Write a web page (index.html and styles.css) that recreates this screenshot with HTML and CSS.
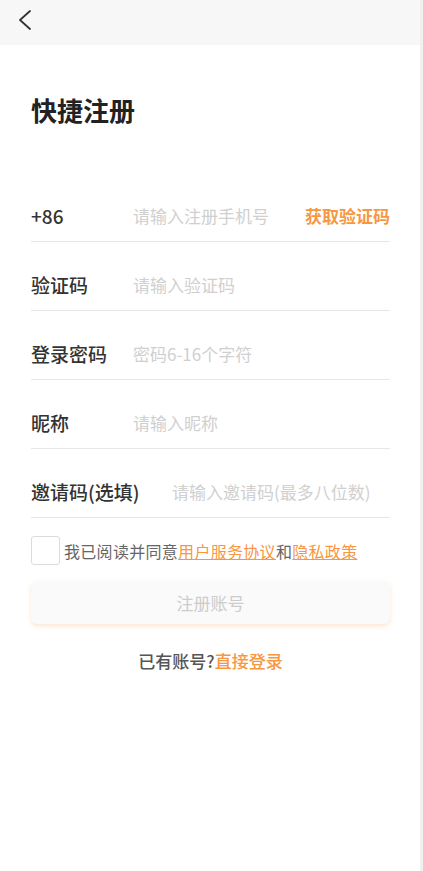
FILE: index.html
```html
<!DOCTYPE html>
<html lang="zh-CN">
<head>
    <meta charset="UTF-8">
    <meta name="viewport" content="width=device-width, initial-scale=1.0">
    <title>快捷注册</title>
    <link rel="stylesheet" href="styles.css">
</head>
<body>
    <div class="page">
        <header class="topbar">
            <svg class="back" width="16" height="22" viewBox="0 0 16 22">
                <path d="M13 2 L3 11 L13 20" fill="none" stroke="#333" stroke-width="1.8" stroke-linecap="round" stroke-linejoin="round"/>
            </svg>
        </header>
        <div class="container">
            <h1>快捷注册</h1>
            <form class="form">
                <div class="row">
                    <span class="label">+86</span>
                    <span class="placeholder">请输入注册手机号</span>
                    <span class="code">获取验证码</span>
                </div>
                <div class="row">
                    <span class="label">验证码</span>
                    <span class="placeholder">请输入验证码</span>
                </div>
                <div class="row">
                    <span class="label">登录密码</span>
                    <span class="placeholder">密码6-16个字符</span>
                </div>
                <div class="row">
                    <span class="label">昵称</span>
                    <span class="placeholder">请输入昵称</span>
                </div>
                <div class="row">
                    <span class="label wide">邀请码(选填)</span>
                    <span class="placeholder">请输入邀请码(最多八位数)</span>
                </div>
                <div class="agree">
                    <span class="box"></span>
                    <span>我已阅读并同意<a>用户服务协议</a>和<a>隐私政策</a></span>
                </div>
                <button type="button" class="submit">注册账号</button>
            </form>
            <p class="login">已有账号?<a>直接登录</a></p>
        </div>
    </div>
</body>
</html>
```

FILE: styles.css
```css
body {
    margin: 0;
    padding: 0;
    background: #f0f0f0;
    font-family: "Noto Sans CJK SC", "Noto Sans", sans-serif;
    color: #333;
}

.page {
    width: 420px;
    min-height: 871px;
    background: #ffffff;
}

.topbar {
    height: 45px;
    background: #f7f7f7;
    display: flex;
    align-items: center;
    padding-left: 17px;
}

.back {
    margin-top: -5px;
}

.container {
    padding: 0 30px 0 31px;
}

h1 {
    margin: 45px 0 0;
    font-size: 26px;
    font-weight: 700;
    line-height: 40px;
    color: #222;
}

.form {
    margin-top: 43px;
    display: flex;
    flex-direction: column;
}

.row {
    height: 69px;
    border-bottom: 1px solid #e6e6e6;
    display: flex;
    align-items: flex-end;
    padding-bottom: 12px;
    box-sizing: border-box;
    line-height: 26px;
}

.label {
    width: 102px;
    font-size: 19px;
    font-weight: 500;
    color: #333;
}

.label.wide {
    width: 141px;
}

.placeholder {
    flex: 1;
    font-size: 17px;
    color: #d0d0d0;
}

.code {
    font-size: 17px;
    font-weight: 700;
    color: #f7973f;
}

.agree {
    margin-top: 18px;
    display: flex;
    align-items: center;
    gap: 4px;
    font-size: 16px;
    letter-spacing: 0.3px;
    color: #666;
}

.box {
    width: 27px;
    height: 27px;
    border: 1px solid #dcdcdc;
    border-radius: 3px;
}

.agree a {
    color: #f7973f;
    text-decoration: underline;
}

.submit {
    margin-top: 16px;
    height: 43px;
    border: none;
    border-radius: 6px;
    background: #fafafa;
    color: #cccccc;
    font-family: inherit;
    font-size: 17px;
    box-shadow: 0 2px 4px rgba(247, 151, 63, 0.25);
}

.login {
    margin: 24px 0 0;
    text-align: center;
    font-size: 17px;
    font-weight: 500;
    color: #555;
}

.login a {
    color: #f7973f;
}
```
